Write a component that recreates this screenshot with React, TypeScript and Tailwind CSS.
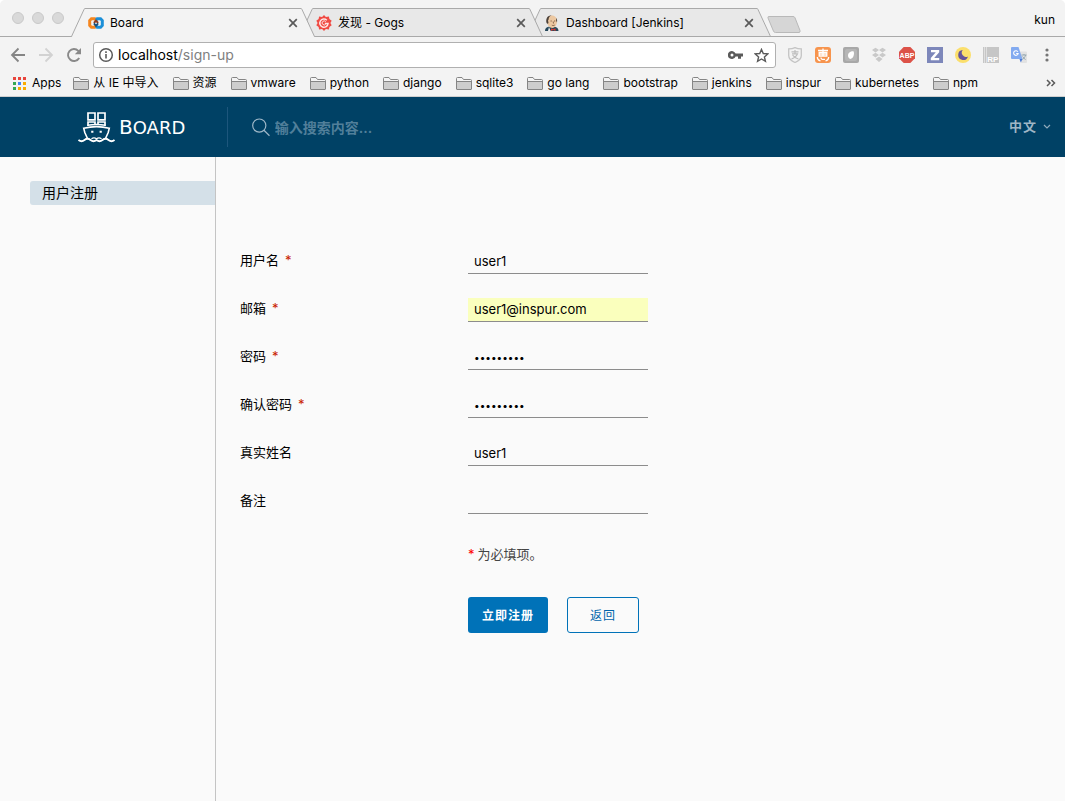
import React from "react";

const CHROME_FONT = "font-['Inter','Noto_Sans_CJK_SC',sans-serif]";

type IconProps = { className?: string };

function BoardFavicon() {
  return (
    <svg width="16" height="16" viewBox="0 0 16 16" aria-hidden="true">
      <path d="M8 5.200 6.800 3.800H3.400L1.700 5.500v5l1.700 1.700h3.400L8 10.800" fill="none" stroke="#f6861f" strokeWidth="3" />
      <path d="m8 5.200 1.200-1.400h3.400l1.700 1.700v5l-1.700 1.700H9.200L8 10.800" fill="none" stroke="#1b8fd8" strokeWidth="3" />
      <path d="M5.200 7.200 8 4.200l2.800 3-1.300 1.200L8 7.200 6.500 8.400z" fill="#8c3d24" />
      <path d="M5.200 9 6.500 7.800 8 9.200l1.500-1.400L10.800 9 8 12.200z" fill="#1d4f78" />
    </svg>
  );
}

function GogsFavicon() {
  return (
    <svg width="16" height="16" viewBox="0 0 16 16" aria-hidden="true">
      <path
        d="m8 0 1.900 1.900 3-.4.5 2.600 2.300 1.600L14.400 8l1.300 2.300-2.300 1.600-.5 2.600-3-.4L8 16l-1.900-1.900-3 .4-.5-2.600L.3 10.300 1.600 8 .3 5.700l2.300-1.600.5-2.600 3 .4z"
        fill="#f04a43"
      />
      <path d="M10.800 5.200A4.100 4.100 0 1 0 12 8.600H8.800" fill="none" stroke="#fde5e3" strokeWidth="1.500" />
      <path d="M9.700 6.700A2 2 0 1 0 9.800 9" fill="none" stroke="#fde5e3" strokeWidth="1" />
    </svg>
  );
}

function JenkinsFavicon() {
  return (
    <svg width="16" height="16" viewBox="0 0 16 16" aria-hidden="true">
      <path d="M1 16c0-2.600 1.500-3.800 3.500-4.200h6c2.400.3 4 1.600 4 4.200z" fill="#26485b" />
      <path d="M3 6c0-3.500 2-5.600 5-5.600s5 2.300 5 5.600-1.600 7-4.600 7S3 10 3 6z" fill="#ecc8a2" />
      <path d="M2.600 8C1.400 3.500 3.600.3 7.600.2c-2 .9-3 2.300-3 4.300L4 5.600 4.500 8c-.5 1-1.400.9-1.900 0z" fill="#4b4038" />
      <path d="M12 3c1.200 1.200 1.400 3 .9 4.600L12 5.600z" fill="#5a4c42" />
      <path d="M6.500 6h1.300M10 6h1.300M7.800 10.200c1 .5 2 .4 2.900-.1M9.200 6.500l.3 2" stroke="#6d4a35" strokeWidth=".8" fill="none" />
      <path d="m7 13.300 2.200 1 2.300-1V16l-2.300-1L7 16z" fill="#d33833" />
      <path d="m5 12 1.600 4H4z" fill="#f1f1f1" />
    </svg>
  );
}

function TabClose() {
  return (
    <svg width="10" height="10" viewBox="0 0 10 10" aria-hidden="true">
      <path d="m1.200 1.200 7.600 7.600m0-7.600L1.200 8.800" stroke="#5a5a5a" strokeWidth="1.700" />
    </svg>
  );
}

function BrowserTab({
  title,
  icon,
  active = false,
  layer,
}: {
  title: string;
  icon: React.ReactNode;
  active?: boolean;
  layer: string;
}) {
  const fill = active ? "#f3f3f3" : "#e8e8e8";
  return (
    <div className={`relative -mr-4 flex h-[29px] w-61 shrink ${layer}`}>
      <svg className="shrink-0" width="14" height="29" viewBox="0 0 14 29" aria-hidden="true">
        <path d="M0 29 1 28.500 13 1.500Q13.300.5 14 .5V29z" fill={fill} />
        <path d="M.5 28.500 13 1.500Q13.300.5 14 .5" fill="none" stroke="#a9a9a9" />
        {!active && <path d="M0 28.500h14" stroke="#a9a9a9" />}
      </svg>
      <div
        className={`flex min-w-0 flex-1 items-center border-t border-[#a9a9a9] pl-[3px] ${
          active ? "bg-[#f3f3f3] pb-px" : "border-b bg-[#e8e8e8]"
        }`}
      >
        {icon}
        <span className="ml-1.5 flex-1 truncate text-[12px] text-black">{title}</span>
        <button type="button" aria-label={`Close ${title}`} className="mr-[3px]">
          <TabClose />
        </button>
      </div>
      <svg className="shrink-0" width="14" height="29" viewBox="0 0 14 29" aria-hidden="true">
        <path d="M0 .5Q.7.5 1 1.500L13 28.500 14 29H0z" fill={fill} />
        <path d="M0 .5Q.7.5 1 1.500l12.500 27" fill="none" stroke="#a9a9a9" />
        {!active && <path d="M0 28.500h14" stroke="#a9a9a9" />}
      </svg>
    </div>
  );
}

function TabStrip() {
  return (
    <div className="flex h-[37px] items-end border-b border-[#a9a9a9] bg-[#f3f3f3] pl-3">
      <div className="flex gap-2 self-center">
        <span className="size-3 rounded-full border border-[#c9c9c9] bg-[#d9d9d9]" />
        <span className="size-3 rounded-full border border-[#c9c9c9] bg-[#d9d9d9]" />
        <span className="size-3 rounded-full border border-[#c9c9c9] bg-[#d9d9d9]" />
      </div>
      <div className="-mb-px ml-[7px] flex min-w-0 items-end">
        <BrowserTab title="Board" icon={<BoardFavicon />} active layer="z-30" />
        <BrowserTab title="发现 - Gogs" icon={<GogsFavicon />} layer="z-20" />
        <BrowserTab title="Dashboard [Jenkins]" icon={<JenkinsFavicon />} layer="z-10" />
      </div>
      <button type="button" aria-label="New tab" className="mb-[3px] ml-3">
        <svg width="34" height="17" viewBox="0 0 34 17" aria-hidden="true">
          <path d="M2 .5h24q1.500 0 2 1.300l5 12.700q.5 2-1 2H8.500q-1.500 0-2-1.300L1 2Q.5.500 2 .5z" fill="#d6d6d6" stroke="#b9b9b9" />
        </svg>
      </button>
      <span className="ml-auto self-center pt-[3px] pr-2.5 text-[12px] text-black">kun</span>
    </div>
  );
}

function Arrow({ className }: IconProps) {
  return (
    <svg className={className} width="16" height="16" viewBox="0 0 16 16" fill="none" stroke="currentColor" strokeWidth="1.800" aria-hidden="true">
      <path d="M15 8H2.500M8.500 1.500 2 8l6.500 6.500" />
    </svg>
  );
}

function Extensions() {
  return (
    <div className="flex shrink-0 items-center gap-3" aria-label="Extensions">
      <svg width="16" height="16" viewBox="0 0 16 16" aria-hidden="true">
        <path d="M8 .6c2 1 4 1.300 6.300 1.300v6.600c0 3.500-3 5.600-6.300 7-3.300-1.400-6.300-3.500-6.300-7V1.900C4 1.900 6 1.600 8 .6z" fill="#f3f3f3" stroke="#c4c4c4" strokeWidth="1.300" />
        <path d="M4.500 4.800h7M8 3v3.600M5 6.800h5.500C9.500 9.500 7.500 11 4.500 12M5.600 8c1.300 2 3.200 3.300 5.800 4" fill="none" stroke="#bdbdbd" strokeWidth="1.200" />
      </svg>
      <svg width="16" height="16" viewBox="0 0 16 16" aria-hidden="true">
        <rect width="16" height="16" rx="3" fill="#f7944d" />
        <path d="M3 3.500h10M8 1.500V9M4.200 5.500h7.600V9H4.200zM4.200 7.200h7.600M2.300 10c0 2 1.500 3.500 3.200 4M13.700 10c0 2-1.500 3.500-3.200 4M6 10.500c0 1.800 1 2.200 4 1.800" fill="none" stroke="#fff" strokeWidth="1.300" />
      </svg>
      <svg width="16" height="16" viewBox="0 0 16 16" aria-hidden="true">
        <rect width="16" height="16" rx="2" fill="#a8a8a8" />
        <rect x="2" y="2" width="12" height="12" rx="2" fill="#b6b6b6" />
        <path d="M10.500 4.200C7.500 4 5 5.700 5 8.500c0 2 1 3.200 2.300 3.400C10.500 11.500 11.800 6.500 10.500 4.200z" fill="#fff" />
      </svg>
      <svg width="16" height="16" viewBox="0 0 16 16" fill="#c9c9c9" aria-hidden="true">
        <path d="M4.500.8 8 3.100 4.500 5.500 1 3.100zM11.500.8 15 3.100 11.500 5.500 8 3.100zM4.500 5.700 8 8l-3.500 2.400L1 8zM11.500 5.700 15 8l-3.500 2.400L8 8zM8 9.500l3.500 2.400L8 15l-3.500-3.100z" />
      </svg>
      <svg width="16" height="16" viewBox="0 0 16 16" aria-hidden="true">
        <path d="M4.700 0h6.600L16 4.700v6.600L11.300 16H4.700L0 11.300V4.700z" fill="#dc5248" />
        <text x="8" y="10.500" textAnchor="middle" fontFamily="Liberation Sans" fontWeight="700" fontSize="7" fill="#fff">ABP</text>
      </svg>
      <svg width="16" height="16" viewBox="0 0 16 16" aria-hidden="true">
        <path d="M0 0h16v16H0z" fill="#7d87ba" />
        <path d="M4 3h8.200v2.200L7.200 11h5v2.200H3.800V11l5-5.800H4z" fill="#fff" />
      </svg>
      <svg width="16" height="16" viewBox="0 0 16 16" aria-hidden="true">
        <circle cx="8" cy="8" r="8" fill="#fbdf6c" />
        <path d="M7.800 3a5 5 0 1 0 5.200 6.400A4.200 4.200 0 0 1 7.800 3z" fill="#65549a" />
      </svg>
      <svg width="16" height="16" viewBox="0 0 16 16" aria-hidden="true">
        <path d="M0 0h16v16H0z" fill="#c6c6c6" />
        <path d="M1.500 0v16M3.500 0v16" stroke="#e6e6e6" strokeWidth=".8" />
        <text x="9.800" y="14.500" textAnchor="middle" fontFamily="Liberation Sans" fontWeight="700" fontSize="8" fill="#fff">RP</text>
      </svg>
      <svg width="16" height="16" viewBox="0 0 16 16" aria-hidden="true">
        <path d="M7 4.500h8a1 1 0 0 1 1 1V15a1 1 0 0 1-1 1h-5z" fill="#e2e2e2" />
        <path d="M1 0h6.500L11.500 12H1a1 1 0 0 1-1-1V1a1 1 0 0 1 1-1z" fill="#82aaf0" />
        <path d="M8.500 12h3L9.800 15.500z" fill="#4a7ad6" />
        <path d="M6.900 4.800A2.300 2.300 0 1 0 7.200 6.500H5.200" fill="none" stroke="#fff" strokeWidth="1.100" />
        <path d="M10.500 8h5M13 7v1M14.600 8c-.6 2.200-1.800 3.500-3.200 4.300M11.500 9.500l3 3.300" fill="none" stroke="#90a4ae" strokeWidth=".9" />
      </svg>
      <button type="button" aria-label="Menu" className="flex w-4 justify-center">
        <svg width="4" height="16" viewBox="0 0 4 16" fill="#757575" aria-hidden="true">
          <circle cx="2" cy="3" r="1.600" />
          <circle cx="2" cy="8" r="1.600" />
          <circle cx="2" cy="13" r="1.600" />
        </svg>
      </button>
    </div>
  );
}

function Toolbar() {
  return (
    <div className="flex items-center bg-[#f3f3f3] px-2.5 pt-[5px] pb-0.5">
      <div className="flex gap-3 pr-[11px]">
        <button type="button" aria-label="Back">
          <Arrow className="text-[#858585]" />
        </button>
        <button type="button" aria-label="Forward">
          <Arrow className="rotate-180 text-[#d2d2d2]" />
        </button>
        <button type="button" aria-label="Reload">
          <svg width="16" height="16" viewBox="0 0 16 16" aria-hidden="true">
            <path d="M13.200 11A6 6 0 1 1 12.300 3.800L14 5.500" fill="none" stroke="#8a8a8a" strokeWidth="1.900" />
            <path d="M15 1v6.200H8.800z" fill="#8a8a8a" />
          </svg>
        </button>
      </div>
      <div className="flex h-[26px] min-w-0 flex-1 items-center rounded-[3px] border border-[#b0b0b0] bg-white pl-1 text-[14px]">
        <svg width="16" height="16" viewBox="0 0 16 16" aria-hidden="true">
          <circle cx="8" cy="8" r="6.300" fill="none" stroke="#5a5a5a" strokeWidth="1.500" />
          <path d="M8 7v4.500M8 4.200V6" stroke="#5a5a5a" strokeWidth="1.600" />
        </svg>
        <span className="ml-1 flex-1 truncate pb-0.5 text-black">
          localhost<span className="text-[#808080]">/sign-up</span>
        </span>
        <svg className="mr-[11px]" width="15" height="14" viewBox="0 0 15 14" aria-hidden="true">
          <path d="M7.600 5.600A4 4 0 1 0 7.600 8.400H10v2.300h3V8.400h2V5.600z" fill="#5a5a5a" />
          <circle cx="4" cy="7" r="1.500" fill="#fff" />
        </svg>
        <button type="button" aria-label="Bookmark this page" className="mr-1.5">
          <svg width="15" height="15" viewBox="0 0 16 16" aria-hidden="true">
            <path d="m8 1.500 1.900 4.400 4.800.4-3.600 3.200 1.100 4.700L8 11.700l-4.200 2.500 1.100-4.700L1.300 6.300l4.800-.4z" fill="none" stroke="#5a5a5a" strokeWidth="1.500" />
          </svg>
        </button>
      </div>
      <div className="pl-[11px]">
        <Extensions />
      </div>
    </div>
  );
}

const bookmarks = [
  "从 IE 中导入",
  "资源",
  "vmware",
  "python",
  "django",
  "sqlite3",
  "go lang",
  "bootstrap",
  "jenkins",
  "inspur",
  "kubernetes",
  "npm",
];

const appDots = ["#e8453c", "#e8453c", "#e8453c", "#34a853", "#4285f4", "#f9ab00", "#34a853", "#f9ab00", "#f9ab00"];

function BookmarksBar() {
  return (
    <nav aria-label="Bookmarks" className="flex h-[27px] items-center overflow-hidden border-b border-[#cfcfcf] bg-[#f3f3f3] pr-[9px] pl-[13px] text-[12px] whitespace-nowrap text-black">
      <a href="#apps" className="mr-3 flex items-center gap-1.5">
        <svg width="13" height="13" viewBox="0 0 13 13" aria-hidden="true">
          {appDots.map((color, i) => (
            <rect key={i} x={(i % 3) * 5} y={Math.floor(i / 3) * 5} width="3" height="3" fill={color} />
          ))}
        </svg>
        Apps
      </a>
      <div className="flex gap-3.5">
        {bookmarks.map((name) => (
          <a key={name} href="#bookmark" className="flex items-center gap-1">
            <svg width="16" height="13" viewBox="0 0 16 13" aria-hidden="true">
              <path d="M.5 12V1.500q0-1 1-1H6L7.500 2.500h7q1 0 1 1V12q0 .5-.5.5H1q-.5 0-.5-.5z" fill="#f4f4f4" stroke="#858585" />
              <path d="M1 5h14v7H1z" fill="#cdcdcd" />
              <path d="M1 4.500h14" stroke="#858585" />
            </svg>
            {name}
          </a>
        ))}
      </div>
      <button type="button" aria-label="More bookmarks" className="ml-auto">
        <svg width="10" height="8" viewBox="0 0 10 8" fill="none" stroke="#5a5a5a" strokeWidth="1.500" aria-hidden="true">
          <path d="m1 1 3 3-3 3M5.500 1l3 3-3 3" />
        </svg>
      </button>
    </nav>
  );
}

function ShipLogo() {
  return (
    <svg width="37" height="31" viewBox="0 0 37 31" fill="none" stroke="#fff" aria-hidden="true">
      <g strokeWidth="1.700">
        <path d="M10 1h7v6.800h-7zM20 1h7v6.800h-7z" />
        <path d="M10 14V10h7v3M20 13v-3h7v4" />
      </g>
      <path d="M9.500 13.200q9-1.500 18 0" strokeWidth="1.500" />
      <path d="M9.500 26.500 6.800 20.500 5.700 16.200Q18.500 13 31.300 16.200L30.200 20.500 27.500 26.500" strokeWidth="1.600" />
      <path d="M.5 28q3 2.500 6 0 3-2.500 6 0 3 2.500 6 0 3 2.500 6 0 3-2.500 6 0 3 2.500 6 0" strokeWidth="1.700" />
      <path d="M13.500 26.800q2.500-2 5 0 2.500-2 5 0" strokeWidth="1.300" />
      <path d="M13.200 19.800h2.200M21.600 19.800h2.200" strokeWidth="2" />
    </svg>
  );
}

function AppHeader() {
  return (
    <header className="flex h-15 shrink-0 items-center bg-[#004165]">
      <a href="#home" className="flex items-center gap-1 pl-[78px] text-white">
        <ShipLogo />
        <span className="font-['DejaVu_Sans',sans-serif] text-[20px] leading-6">
          B<span className="text-[18px]">OARD</span>
        </span>
      </a>
      <div className="ml-[42px] h-10 border-l border-[#1d567c]" />
      <label className="flex min-w-0 flex-1 items-center gap-1 pl-6">
        <svg width="19" height="19" viewBox="0 0 19 19" fill="none" stroke="#9fb8c8" strokeWidth="1.200" aria-hidden="true">
          <circle cx="7.500" cy="7.500" r="6.800" />
          <path d="m12.300 12.300 5.700 5.700" />
        </svg>
        <input
          type="search"
          aria-label="搜索"
          placeholder="输入搜索内容..."
          className="w-full bg-transparent text-[14px] font-semibold text-white outline-none placeholder:text-[#517f9a]"
        />
      </label>
      <button type="button" className="flex items-center gap-1.5 pr-3.5 text-[13px] font-semibold tracking-[1px] text-[#9fb6c5]">
        中文
        <svg width="8" height="6" viewBox="0 0 8 6" fill="none" stroke="#8faabb" strokeWidth="1.200" aria-hidden="true">
          <path d="m1 1 3 3 3-3" />
        </svg>
      </button>
    </header>
  );
}

type FieldSpec = {
  id: string;
  label: string;
  type: string;
  value: string;
  required?: boolean;
  autofilled?: boolean;
};

const fields: FieldSpec[] = [
  { id: "username", label: "用户名", type: "text", value: "user1", required: true },
  { id: "email", label: "邮箱", type: "email", value: "user1@inspur.com", required: true, autofilled: true },
  { id: "password", label: "密码", type: "password", value: "password1", required: true },
  { id: "confirm", label: "确认密码", type: "password", value: "password1", required: true },
  { id: "realname", label: "真实姓名", type: "text", value: "user1" },
  { id: "comment", label: "备注", type: "text", value: "" },
];

function Field({ id, label, type, value, required, autofilled }: FieldSpec) {
  return (
    <div className="flex items-start">
      <label htmlFor={id} className="w-57 shrink-0 text-[13px] leading-5 text-black">
        {label}
        {required && <span className="ml-1.5 text-[#c92100]">*</span>}
      </label>
      <input
        id={id}
        type={type}
        defaultValue={value}
        className={`h-6 w-45 border-b border-[#8c8c8c] px-1.5 pb-0.5 text-black outline-none ${
          type === "password" ? "text-[10px]" : "text-[13px]"
        } ${autofilled ? "bg-[#faffbd]" : "bg-transparent"}`}
      />
    </div>
  );
}

function SignUpForm() {
  return (
    <form className="flex flex-col gap-6 pt-[93px] pl-6" onSubmit={(e) => e.preventDefault()}>
      {fields.map((field) => (
        <Field key={field.id} {...field} />
      ))}
      <div className="pl-57">
        <p className="pt-1 text-[13px] leading-6 text-[#444]">
          <span className="mr-[3px] text-[#ff0000]">*</span>
          为必填项。
        </p>
        <div className="flex gap-[19px] pt-[31px]">
          <button type="submit" className="h-9 w-20 rounded-[3px] bg-[#0072b8] pt-0.5 text-[12px] font-bold tracking-[1px] text-white">
            立即注册
          </button>
          <button type="button" className="h-9 w-18 rounded-[3px] border border-[#0072b8] pt-0.5 text-[12px] tracking-[1px] text-[#0065ab]">
            返回
          </button>
        </div>
      </div>
    </form>
  );
}

export default function App() {
  return (
    <div className={`flex min-h-screen flex-col overflow-hidden rounded-t-[5px] bg-[#fafafa] ${CHROME_FONT}`}>
      <TabStrip />
      <Toolbar />
      <BookmarksBar />
      <AppHeader />
      <div className="flex flex-1">
        <aside className="w-54 shrink-0 border-r border-[#c4c4c4] pt-6 pl-[30px]">
          <a href="#sign-up" className="block rounded-l-[3px] bg-[#d4e0e8] pl-3 text-[14px] leading-6 text-black">
            用户注册
          </a>
        </aside>
        <main className="min-w-0 flex-1">
          <SignUpForm />
        </main>
      </div>
    </div>
  );
}
